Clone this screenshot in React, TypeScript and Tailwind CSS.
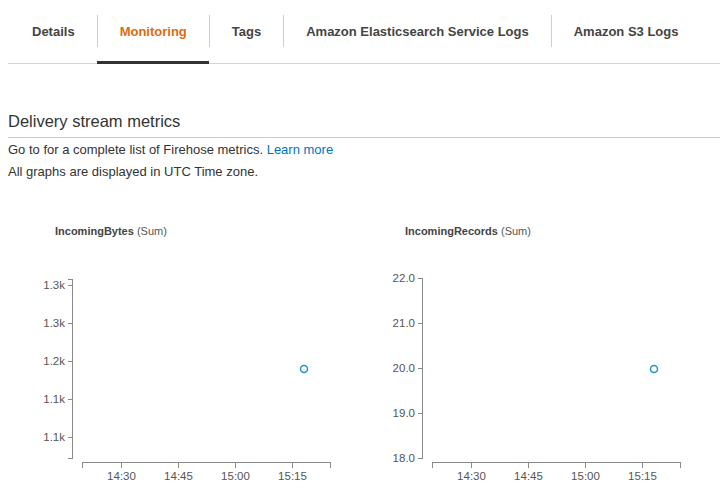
import React from 'react';

const tabs = ['Details', 'Monitoring', 'Tags', 'Amazon Elasticsearch Service Logs', 'Amazon S3 Logs'];

interface ChartProps {
  metric: string;
  ticks: { y: number; label: string }[];
  top: number;
}

const xTicks = [
  { x: 113, label: '14:30' },
  { x: 170, label: '14:45' },
  { x: 227, label: '15:00' },
  { x: 284, label: '15:15' },
];

const Chart = ({ metric, ticks, top }: ChartProps) => {
  return (
    <div className="w-[350px] flex flex-col">
      <div className="ml-[47px] h-[14px] text-[11px] leading-[14px] text-[#444]">
        <span className="font-bold">{metric}</span> <span className="text-[#555]">(Sum)</span>
      </div>
      <svg width="350" height="259" className="block">
        <g stroke="#8a8a8a" strokeWidth="1" fill="none" shapeRendering="crispEdges">
          {/* y axis with outer caps */}
          <path d={`M59.5 ${top + 0.5} H64.5 V220.5 H59.5`} />
          {ticks.map((t) => (
            <line key={t.label + t.y} x1="59.5" x2="64.5" y1={t.y + 0.5} y2={t.y + 0.5} />
          ))}
          {/* x axis */}
          <path d="M74.5 229.5 V224.5 H322.5 V229.5" />
          {xTicks.map((t) => (
            <line key={t.label} x1={t.x + 0.5} x2={t.x + 0.5} y1="224.5" y2="229.5" />
          ))}
        </g>
        <g fontFamily="'Liberation Sans', Arial, sans-serif" fontSize="11.5" fill="#555">
          {ticks.map((t) => (
            <text key={t.label + t.y} x="57" y={t.y + 4} textAnchor="end">
              {t.label}
            </text>
          ))}
          {xTicks.map((t) => (
            <text key={t.label} x={t.x + 0.5} y="242" textAnchor="middle">
              {t.label}
            </text>
          ))}
        </g>
        <circle cx="296" cy="131" r="3.5" fill="#fff" stroke="#2293d1" strokeWidth="1.5" />
      </svg>
    </div>
  );
};

export default function App() {
  return (
    <div className="w-[720px] h-[497px] overflow-hidden bg-white pl-2 font-['Liberation_Sans',Arial,sans-serif] text-[#333]">
      <div className="flex border-b border-[#d5d5d5] h-[64px]">
        {tabs.map((tab, i) => {
          const active = tab === 'Monitoring';
          return (
            <div
              key={tab}
              className={`-mb-px h-[64px] pt-[15px] pb-[14px] border-b-[3px] ${active ? 'border-[#333]' : 'border-transparent'}`}
            >
              <div
                className={`h-[32px] pt-px flex items-center text-[13px] font-bold ${i === 0 ? 'pl-[24px] pr-[22px]' : 'px-[22px] border-l border-[#cfcfcf]'} ${active ? 'text-[#dd6b10]' : 'text-[#444]'}`}
              >
                {tab}
              </div>
            </div>
          );
        })}
      </div>

      <div className="mt-[46px] pb-[5px] border-b border-[#cccccc] text-[16.5px] leading-[22px] text-[#333]">
        Delivery stream metrics
      </div>
      <div className="mt-px text-[13px] leading-[22px] text-[#333]">
        <div>
          Go to for a complete list of Firehose metrics. <span className="text-[#0073bb]">Learn more</span>
        </div>
        <div>All graphs are displayed in UTC Time zone.</div>
      </div>

      <div className="mt-[41px] flex">
        <Chart
          metric="IncomingBytes"
          top={41}
          ticks={[
            { y: 47, label: '1.3k' },
            { y: 85, label: '1.3k' },
            { y: 123, label: '1.2k' },
            { y: 161, label: '1.1k' },
            { y: 199, label: '1.1k' },
          ]}
        />
        <Chart
          metric="IncomingRecords"
          top={40}
          ticks={[
            { y: 40, label: '22.0' },
            { y: 85, label: '21.0' },
            { y: 130, label: '20.0' },
            { y: 175, label: '19.0' },
            { y: 220, label: '18.0' },
          ]}
        />
      </div>
    </div>
  );
}
